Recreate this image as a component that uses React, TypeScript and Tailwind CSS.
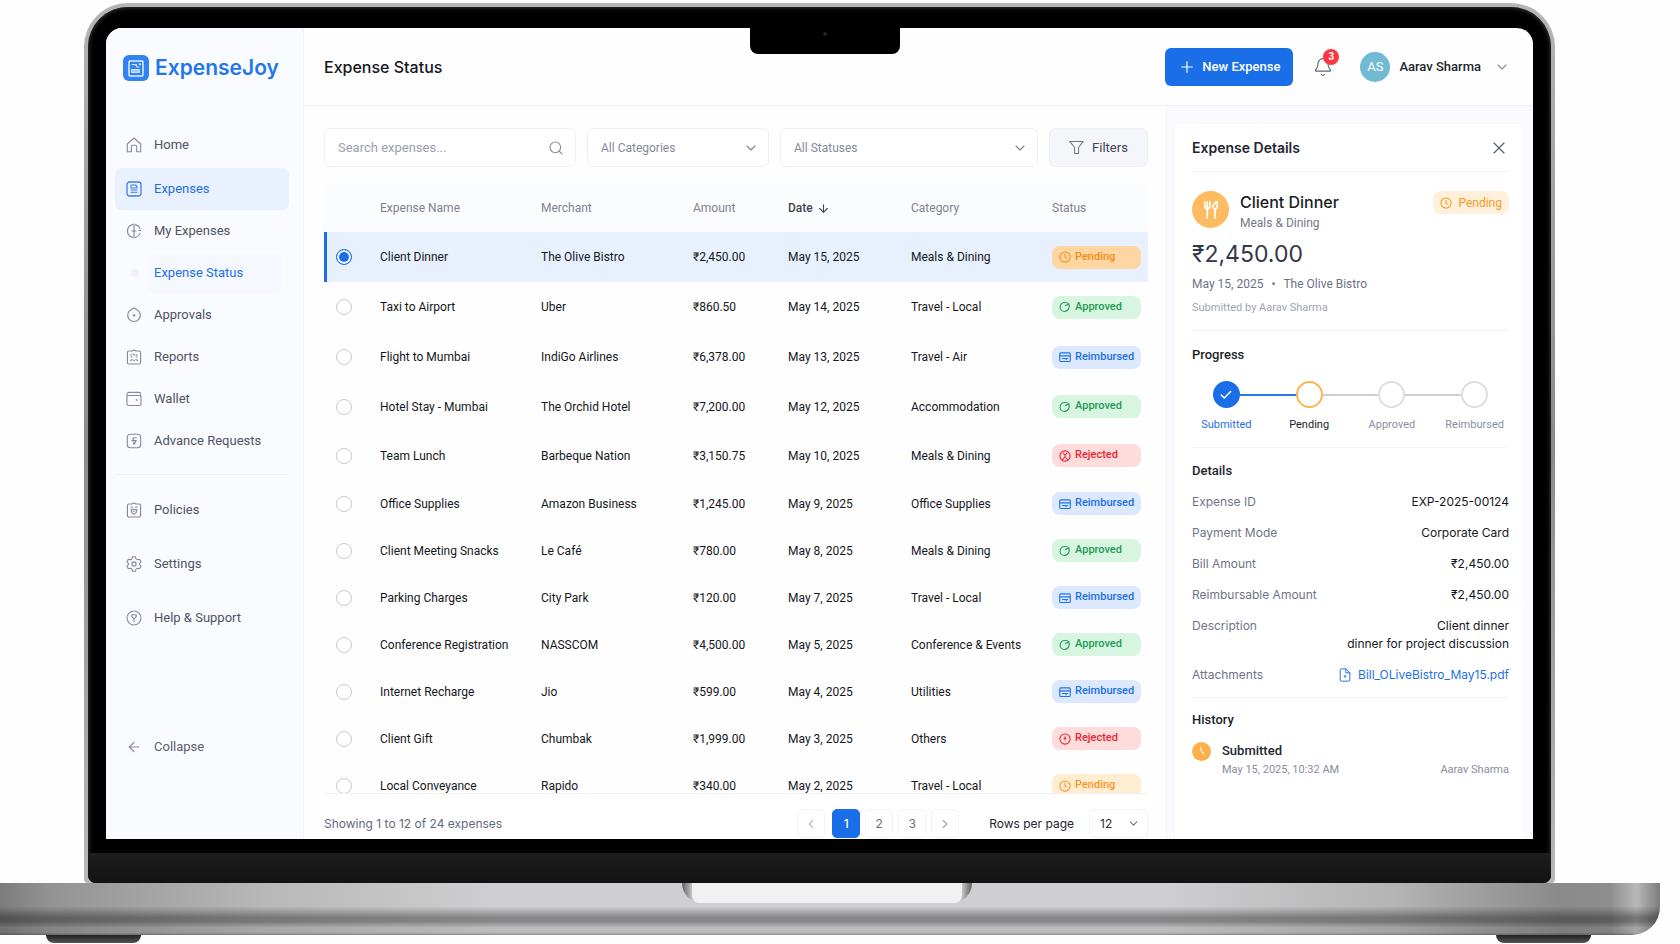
import { useState } from "react";
import type { ReactNode } from "react";
import { ArrowDown, ArrowLeft, Bell, Check, ChevronDown, ChevronLeft, ChevronRight, Plus, Search, X } from "lucide-react";

type Status = "Pending" | "Approved" | "Reimbursed" | "Rejected";

type Expense = {
  name: string;
  merchant: string;
  amount: string;
  date: string;
  category: string;
  status: Status;
};

const expenses: Expense[] = [
  { name: "Client Dinner", merchant: "The Olive Bistro", amount: "₹2,450.00", date: "May 15, 2025", category: "Meals & Dining", status: "Pending" },
  { name: "Taxi to Airport", merchant: "Uber", amount: "₹860.50", date: "May 14, 2025", category: "Travel - Local", status: "Approved" },
  { name: "Flight to Mumbai", merchant: "IndiGo Airlines", amount: "₹6,378.00", date: "May 13, 2025", category: "Travel - Air", status: "Reimbursed" },
  { name: "Hotel Stay - Mumbai", merchant: "The Orchid Hotel", amount: "₹7,200.00", date: "May 12, 2025", category: "Accommodation", status: "Approved" },
  { name: "Team Lunch", merchant: "Barbeque Nation", amount: "₹3,150.75", date: "May 10, 2025", category: "Meals & Dining", status: "Rejected" },
  { name: "Office Supplies", merchant: "Amazon Business", amount: "₹1,245.00", date: "May 9, 2025", category: "Office Supplies", status: "Reimbursed" },
  { name: "Client Meeting Snacks", merchant: "Le Café", amount: "₹780.00", date: "May 8, 2025", category: "Meals & Dining", status: "Approved" },
  { name: "Parking Charges", merchant: "City Park", amount: "₹120.00", date: "May 7, 2025", category: "Travel - Local", status: "Reimbursed" },
  { name: "Conference Registration", merchant: "NASSCOM", amount: "₹4,500.00", date: "May 5, 2025", category: "Conference & Events", status: "Approved" },
  { name: "Internet Recharge", merchant: "Jio", amount: "₹599.00", date: "May 4, 2025", category: "Utilities", status: "Reimbursed" },
  { name: "Client Gift", merchant: "Chumbak", amount: "₹1,999.00", date: "May 3, 2025", category: "Others", status: "Rejected" },
  { name: "Local Conveyance", merchant: "Rapido", amount: "₹340.00", date: "May 2, 2025", category: "Travel - Local", status: "Pending" },
];

const statusStyles: Record<Status, string> = {
  Pending: "bg-[#ffedd2] text-[#f5981d]",
  Approved: "bg-[#d8f5e2] text-[#1c9b52]",
  Reimbursed: "bg-[#dbe8fe] text-[#2270e8]",
  Rejected: "bg-[#ffdcdc] text-[#e8262f]",
};

function Glyph({ children, className = "size-4" }: { children: ReactNode; className?: string }) {
  return (
    <svg viewBox="0 0 16 16" fill="none" stroke="currentColor" strokeWidth="1.1" strokeLinecap="round" strokeLinejoin="round" className={`shrink-0 ${className}`} aria-hidden="true">
      {children}
    </svg>
  );
}

const clipboard = "M3 2h3l2-1 2 1h3c1 0 1.6.7 1.6 1.6v9.8c0 .9-.7 1.6-1.6 1.6H3c-1 0-1.6-.7-1.6-1.6V3.6C1.4 2.7 2 2 3 2z";

const navIcons: Record<string, ReactNode> = {
  Home: <path d="M1.3 7 8 1l6.7 6v7.7h-4V9.8c0-.9-.6-1.5-1.4-1.5H6.7c-.8 0-1.4.6-1.4 1.5v4.9h-4z" />,
  Expenses: (
    <>
      <rect x="1" y="1" width="14" height="14" rx="2.5" strokeWidth="1.3" />
      <path d="M5 4h4.5L11 5.5V7H5zM5 9h6M5 11.2h6" />
    </>
  ),
  "My Expenses": (
    <>
      <path d="M6.5 1.6a6.6 6.6 0 0 0 0 12.8M9.5 1.6a6.6 6.6 0 0 1 4.6 4M14.1 10.4a6.6 6.6 0 0 1-4.6 4M8 1v14" />
      <path d="M6 8h4M13 7.5h2" />
    </>
  ),
  Approvals: (
    <>
      <path d="M5.5 2.4a6.3 6.3 0 1 0 5 0M5.5 2.4 8 1l2.5 1.4" />
      <path d="M7 8.3h2M8 7.3v2" />
    </>
  ),
  Reports: (
    <>
      <path d={clipboard} />
      <path d="M4.5 6H6M7.5 5.2l1 1M10 6h1.5M5 8h1M10 8h1M4.5 11.5l1.5-1M7.3 11.2h1.4M10 10.5l1.5 1" />
    </>
  ),
  Wallet: (
    <>
      <path d="M1 4.5V3.2C1 2 1.8 1.4 3 1.4h10c1 0 1.6.6 1.6 1.6v1.5" />
      <rect x="1" y="4.5" width="14" height="10" rx="1.5" />
      <path d="M10.4 9h.6" strokeWidth="1.6" />
    </>
  ),
  "Advance Requests": (
    <>
      <rect x="1.3" y="1.2" width="13.4" height="13.6" rx="3" />
      <path d="M10.5 4.8H8.2C6.6 4.8 6.3 6 7.5 6.5M5.8 7.6h4.4L8.5 11M7.7 9v2.3" />
    </>
  ),
  Policies: (
    <>
      <path d={clipboard} />
      <path d="M5 5h1.5M9.5 5H11M5.3 7.2h5.4v2c0 1.6-1.4 2.4-2.7 3-1.3-.6-2.7-1.4-2.7-3zM7 9h2" />
    </>
  ),
  Settings: (
    <>
      <path d="M6.6.8h2.8l.6 2.1 1.5.9 2-.5 1.6 2.6-1.5 1.5v1.2l1.5 1.5-1.6 2.6-2-.5-1.5.9-.6 2.1H6.6L6 13.1l-1.5-.9-2 .5L.9 10.1l1.5-1.5V7.4L.9 5.9l1.6-2.6 2 .5L6 2.9z" />
      <circle cx="8" cy="8" r="2.1" />
    </>
  ),
  "Help & Support": (
    <>
      <circle cx="8" cy="8" r="7" />
      <path d="M5.8 4.8h4.4v1.8L8 8.8 5.8 6.6zM8 8.8v3" />
    </>
  ),
};

function StatusIcon({ status, alternate = false }: { status: Status; alternate?: boolean }) {
  if (status === "Approved") {
    return (
      <Glyph className="size-3">
        <path d="M13.5 5.5c1 4-1.8 8.5-6.2 8.5A5.8 5.8 0 0 1 1.5 8.200C1.500 4.500 4.500 2 8 2c2.500 0 4.300.5 5.500 2L8.500 6" strokeWidth="1.5" />
      </Glyph>
    );
  }
  if (status === "Reimbursed") {
    return (
      <Glyph className="size-3">
        <rect x="1" y="2.5" width="14" height="11.5" rx="1.5" strokeWidth="1.5" />
        <path d="M1 6.5h14M4.5 10h7M9.5 10v1.5" strokeWidth="1.5" />
      </Glyph>
    );
  }
  if (status === "Rejected" && alternate) {
    return (
      <Glyph className="size-3">
        <circle cx="8" cy="8" r="6.8" strokeWidth="1.5" />
        <path d="M4.5 13 8 9l3.5 4M8 9V6.5M5.5 4.5l2.5 2 2.5-2" strokeWidth="1.5" />
      </Glyph>
    );
  }
  return (
    <Glyph className="size-3">
      <circle cx="8" cy="8" r="6.8" strokeWidth="1.4" />
      <path d={status === "Rejected" ? "M8 5v4M6.5 7h3" : "M8 4v4.5l2.5 1"} strokeWidth="1.4" />
    </Glyph>
  );
}

function NavItem({ label, active = false }: { label: string; active?: boolean }) {
  return (
    <a
      href="#"
      className={`flex h-[42px] items-center gap-3 rounded-md pl-[11px] text-[13px] ${active ? "mt-0.5 bg-[#eaf1fe] text-[#1f6fe5]" : "text-[#4d5365]"}`}
    >
      <span className={active ? "text-[#3f7fe8]" : "text-[#838a9b]"}>
        <Glyph>{navIcons[label]}</Glyph>
      </span>
      {label}
    </a>
  );
}

function Sidebar() {
  return (
    <aside className="flex w-[198px] shrink-0 flex-col border-r border-[#f2f3f8] bg-[#fafbff] pr-[14px] pb-[71px] pl-[9px]">
      <div className="flex h-[78px] items-center gap-1.5 pt-0.5 pl-2 font-['Inter'] text-[21px] font-semibold text-[#2377ea]">
        <svg viewBox="0 0 26 26" className="size-[26px]" aria-hidden="true">
          <rect width="26" height="26" rx="6" fill="#3182f3" />
          <rect x="6" y="6" width="14" height="15" rx="1" fill="none" stroke="#e4effe" strokeWidth="1.5" />
          <path d="M8.5 9.5h5V12h3M8.5 14.5h8v3h-8z" fill="#a9cbfb" stroke="#cfe2fd" />
          <circle cx="17" cy="9.3" r="1" fill="#fff" />
        </svg>
        ExpenseJoy
      </div>
      <nav className="mt-[18px]">
        <NavItem label="Home" />
        <NavItem label="Expenses" active />
        <NavItem label="My Expenses" />
        <a href="#" className="flex h-[42px] items-center pr-2 pl-4 text-[13px] text-[#1f6fe5]">
          <span className="mr-[9px] size-2 rounded-full bg-[#eef0fc]" />
          <span className="flex h-[39px] flex-1 items-center rounded-md bg-[#f5f8ff] pl-1.5">Expense Status</span>
        </a>
        <NavItem label="Approvals" />
        <NavItem label="Reports" />
        <NavItem label="Wallet" />
        <NavItem label="Advance Requests" />
      </nav>
      <nav className="mt-3 grid gap-3 border-t border-[#eef0f6] pt-[14px]">
        <NavItem label="Policies" />
        <NavItem label="Settings" />
        <NavItem label="Help & Support" />
      </nav>
      <button type="button" className="mt-auto flex h-[42px] items-center gap-3 pl-[11px] text-[13px] text-[#596073]">
        <ArrowLeft className="size-4 text-[#838a9b]" strokeWidth={1.8} />
        Collapse
      </button>
    </aside>
  );
}

function Header() {
  return (
    <header className="flex h-[78px] shrink-0 items-center border-b border-[#f0f1f6] pr-[23px] pl-5">
      <h1 className="font-['Inter'] text-base font-medium text-[#15171f]">Expense Status</h1>
      <button type="button" className="ml-auto flex h-[38px] w-32 items-center justify-center gap-1.5 rounded-md bg-[#1a6ee8] text-[13px] font-medium whitespace-nowrap text-white">
        <Plus className="size-[18px]" strokeWidth={1.6} />
        New Expense
      </button>
      <button type="button" aria-label="Notifications, 3 unread" className="relative ml-5 text-[#5d6475]">
        <Bell className="size-5" strokeWidth={1.4} />
        <span className="absolute -top-2 left-2.5 flex size-4 items-center justify-center rounded-full bg-[#fb3640] text-[10px] font-bold text-white">3</span>
      </button>
      <button type="button" className="ml-[27px] flex items-center gap-[9px] text-[13px] font-medium text-[#22252f]">
        <span className="flex size-[30px] items-center justify-center rounded-full bg-[#70bbd3] text-[13px] font-normal text-white">AS</span>
        Aarav Sharma
        <ChevronDown className="ml-1 size-4 text-[#878d9c]" strokeWidth={1.6} />
      </button>
    </header>
  );
}

function Dropdown({ label, className }: { label: string; className: string }) {
  return (
    <div className={`relative ${className}`}>
      <select aria-label={label} className="h-full w-full appearance-none rounded-md border border-[#eff0f4] bg-white px-[13px] text-xs text-[#858a9a]">
        <option>{label}</option>
      </select>
      <ChevronDown className="pointer-events-none absolute top-3 right-2.5 size-4 text-[#7d8393]" strokeWidth={1.6} />
    </div>
  );
}

function Toolbar() {
  return (
    <div className="flex h-[39px] shrink-0 gap-[11px]">
      <div className="relative w-[252px]">
        <input type="search" aria-label="Search expenses" placeholder="Search expenses..." className="h-full w-full rounded-md border border-[#eff0f4] bg-white pr-10 pl-[13px] text-[13px] placeholder:text-[#9a9fac]" />
        <Search className="absolute top-3 right-3 size-4 text-[#858b9b]" strokeWidth={1.6} />
      </div>
      <Dropdown label="All Categories" className="w-[182px]" />
      <Dropdown label="All Statuses" className="flex-1" />
      <button type="button" className="flex w-[99px] items-center justify-center gap-2 rounded-md border border-[#eff0f4] bg-[#f5f6fa] text-[13px] text-[#404554]">
        <Glyph className="size-[15px] text-[#6f7585]">
          <path d="M.8 1.5h14.4L10.2 8v6.5H6V8z" />
        </Glyph>
        Filters
      </button>
    </div>
  );
}

function rowHeight(index: number) {
  return index < 3 ? "h-[50px]" : index < 5 ? "h-[49px]" : "h-[47px]";
}

function ExpenseTable() {
  const [selected, setSelected] = useState("Client Dinner");

  return (
    <div className="mt-[17px] min-h-0 flex-1 overflow-hidden">
      <table className="w-full table-fixed text-left text-xs whitespace-nowrap">
        <colgroup>
          <col className="w-14" />
          <col className="w-[161px]" />
          <col className="w-[152px]" />
          <col className="w-[95px]" />
          <col className="w-[123px]" />
          <col className="w-[141px]" />
          <col />
        </colgroup>
        <thead className="bg-[#fbfcfe] text-[#7d8293]">
          <tr className="h-12">
            <th className="font-normal" aria-label="Select" />
            <th className="font-normal">Expense Name</th>
            <th className="font-normal">Merchant</th>
            <th className="font-normal">Amount</th>
            <th className="font-medium text-[#3f4454]" aria-sort="descending">
              <span className="flex items-center gap-1">
                Date <ArrowDown className="size-[13px]" />
              </span>
            </th>
            <th className="font-normal">Category</th>
            <th className="font-normal">Status</th>
          </tr>
        </thead>
        <tbody className="text-[#15171c]">
          {expenses.map((expense, index) => {
            const isSelected = expense.name === selected;
            return (
              <tr key={expense.name} className={`${rowHeight(index)} ${isSelected ? "bg-[#e8f0fd]" : ""}`}>
                <td className={isSelected ? "shadow-[inset_3px_0_0_#1a6ee6]" : ""}>
                  <input
                    type="radio"
                    name="expense"
                    aria-label={`Select ${expense.name}`}
                    checked={isSelected}
                    onChange={() => setSelected(expense.name)}
                    className="ml-3 block size-4 appearance-none rounded-full border border-[#c6c9d3] bg-white checked:border-[#1a6ee6] checked:bg-[#1a6ee6] checked:shadow-[inset_0_0_0_2px_white]"
                  />
                </td>
                <td>{expense.name}</td>
                <td>{expense.merchant}</td>
                <td>{expense.amount}</td>
                <td>{expense.date}</td>
                <td>{expense.category}</td>
                <td>
                  <span className={`flex h-[23px] w-[89px] items-center gap-1 rounded-lg pl-[7px] text-[11px] font-medium ${isSelected && expense.status === "Pending" ? "bg-[#fed6a2] text-[#f58c14]" : statusStyles[expense.status]}`}>
                    <StatusIcon status={expense.status} alternate={expense.name === "Team Lunch"} />
                    {expense.status}
                  </span>
                </td>
              </tr>
            );
          })}
        </tbody>
      </table>
    </div>
  );
}

function Pagination() {
  const pageButton = "flex h-[29px] w-7 items-center justify-center rounded-[5px] border text-xs";

  return (
    <div className="flex h-[46px] shrink-0 items-start border-t border-[#eef0f4] bg-white pt-[15px] font-['Inter']">
      <p className="flex h-[29px] items-center text-xs text-[#636a7c]">Showing 1 to 12 of 24 expenses</p>
      <div className="ml-auto flex gap-[5px] text-[#6b7182]">
        <button type="button" aria-label="Previous page" className={`${pageButton} mr-0.5 border-[#f2f3f7] text-[#b6bac5]`}>
          <ChevronLeft className="size-[14px]" />
        </button>
        <button type="button" aria-current="page" className={`${pageButton} border-[#1a6ee8] bg-[#1a6ee8] font-medium text-white`}>1</button>
        <button type="button" className={`${pageButton} border-[#f2f3f7]`}>2</button>
        <button type="button" className={`${pageButton} border-[#f2f3f7]`}>3</button>
        <button type="button" aria-label="Next page" className={`${pageButton} border-[#f2f3f7] text-[#a4a9b6]`}>
          <ChevronRight className="size-[14px]" />
        </button>
      </div>
      <label className="ml-[30px] flex items-center gap-[15px] text-xs text-[#22252e]">
        Rows per page
        <span className="relative">
          <select className="h-[29px] w-[59px] appearance-none rounded-[5px] border border-[#f2f3f7] bg-white pl-[10px] text-xs text-[#2c303c]">
            <option>12</option>
            <option>24</option>
          </select>
          <ChevronDown className="pointer-events-none absolute top-2 right-2 size-[13px] text-[#6b7182]" />
        </span>
      </label>
    </div>
  );
}

const steps = [
  { label: "Submitted", circle: "border-[#1a6ee8] bg-[#1a6ee8]", text: "text-[#1f6fe5]", before: "", after: "bg-[#2c78e4]" },
  { label: "Pending", circle: "border-[#fbb44e] bg-white", text: "text-[#1b1e27]", before: "bg-[#2c78e4]", after: "bg-[#ccced8]" },
  { label: "Approved", circle: "border-[#dcdee6] bg-white", text: "text-[#8a8fa0]", before: "bg-[#ccced8]", after: "bg-[#ccced8]" },
  { label: "Reimbursed", circle: "border-[#dcdee6] bg-white", text: "text-[#8a8fa0]", before: "bg-[#ccced8]", after: "" },
];

const details = [
  ["Expense ID", "EXP-2025-00124"],
  ["Payment Mode", "Corporate Card"],
  ["Bill Amount", "₹2,450.00"],
  ["Reimbursable Amount", "₹2,450.00"],
];

function ExpenseDetails() {
  return (
    <aside className="w-[367px] shrink-0 overflow-hidden border-l border-[#f4f5fa] bg-[#fafaff] pt-[17px] pr-2 pl-[7px]">
      <div className="h-full rounded-t-md border border-b-0 border-[#f6f6fb] bg-white pr-[15px] pl-[17px]">
        <div className="flex h-12 items-center justify-between border-b border-[#f1f2f6]">
          <h2 className="font-['Inter'] text-sm font-semibold text-[#22252f]">Expense Details</h2>
          <button type="button" aria-label="Close details" className="text-[#5a6070]">
            <X className="size-5" strokeWidth={1.4} />
          </button>
        </div>

        <section className="border-b border-[#f1f2f6] pt-[19px] pb-[13px]">
          <div className="flex items-start">
            <span className="flex size-[37px] items-center justify-center rounded-full bg-[#fdbb62] text-white">
              <Glyph className="size-[18px]">
                <path d="M2.5 1v3.5C2.5 6 3.3 7 4.7 7S7 6 7 4.5V1M4.7 1v14M9.5 4.5c0 1.5.8 2.5 2 2.5s2-1 2-2.5V1h-1.3L9.5 4.500M11.5 7v8" strokeWidth="1.5" />
              </Glyph>
            </span>
            <div className="ml-[11px]">
              <h3 className="font-['Inter'] text-base leading-[22px] font-medium text-[#191c25]">Client Dinner</h3>
              <p className="text-xs leading-5 text-[#737889]">Meals &amp; Dining</p>
            </div>
            <span className="ml-auto flex h-[23px] items-center gap-1.5 rounded-lg bg-[#fff0dc] px-[7px] text-xs text-[#f59a24]">
              <StatusIcon status="Pending" />
              Pending
            </span>
          </div>
          <p className="font-['Inter'] text-[23px] leading-[42px] text-[#333848]">₹2,450.00</p>
          <p className="flex gap-2 text-xs leading-[18px] text-[#6d7284]">
            <span>May 15, 2025</span>
            <span>•</span>
            <span>The Olive Bistro</span>
          </p>
          <p className="pt-1.5 text-[11px] leading-[18px] text-[#a0a4b2]">Submitted by Aarav Sharma</p>
        </section>

        <section className="border-b border-[#f5f6f9] py-[14px]">
          <h3 className="text-[13px] leading-5 font-medium text-[#1c1f29]">Progress</h3>
          <ol className="-mx-[7px] mt-4 grid grid-cols-4">
            {steps.map((step, index) => (
              <li key={step.label}>
                <div className="flex items-center">
                  <span className={`h-0.5 flex-1 ${step.before}`} />
                  <span className={`flex size-[27px] items-center justify-center rounded-full border-2 text-white ${step.circle}`}>
                    {index === 0 && <Check className="size-[14px]" strokeWidth={2.5} />}
                  </span>
                  <span className={`h-0.5 flex-1 ${step.after}`} />
                </div>
                <p className={`mt-[9px] text-center text-[11px] leading-4 ${step.text}`}>{step.label}</p>
              </li>
            ))}
          </ol>
        </section>

        <section className="border-b border-[#f1f2f6] py-[13px]">
          <h3 className="text-[13px] leading-5 font-medium text-[#1c1f29]">Details</h3>
          <dl className="mt-3 grid gap-[13px] font-['Inter'] text-xs leading-[18px]">
            {details.map(([label, value]) => (
              <div key={label} className="flex justify-between">
                <dt className="text-[#6f7486]">{label}</dt>
                <dd className="text-[#15171c]">{value}</dd>
              </div>
            ))}
            <div className="flex justify-between">
              <dt className="text-[#6f7486]">Description</dt>
              <dd className="text-right text-[#15171c]">
                Client dinner
                <br />
                dinner for project discussion
              </dd>
            </div>
            <div className="flex justify-between">
              <dt className="text-[#6f7486]">Attachments</dt>
              <dd>
                <a href="#" className="flex items-center gap-1.5 text-[#1f6fe5]">
                  <Glyph className="size-[14px]">
                    <path d="M9 1H3.8C3 1 2.5 1.5 2.5 2.3v11.4c0 .8.5 1.3 1.3 1.3h8.4c.8 0 1.3-.5 1.3-1.3V5.5L9 1v4.5h4.5M7 9.5h2M8 8.5v2" />
                  </Glyph>
                  Bill_OLiveBistro_May15.pdf
                </a>
              </dd>
            </div>
          </dl>
        </section>

        <section className="pt-3">
          <h3 className="text-[13px] leading-5 font-medium text-[#1c1f29]">History</h3>
          <div className="mt-3 flex gap-[11px]">
            <span className="flex size-[19px] items-center justify-center rounded-full bg-[#fcb04c] text-white">
              <Glyph className="size-[15px]">
                <path d="M7 3.5 8 8l2.5 2.5" />
              </Glyph>
            </span>
            <div className="flex-1">
              <p className="text-[13px] leading-[18px] font-medium text-[#22252f]">Submitted</p>
              <p className="flex justify-between text-[11px] leading-5 text-[#888d9d]">
                <time>May 15, 2025, 10:32 AM</time>
                <span>Aarav Sharma</span>
              </p>
            </div>
          </div>
        </section>
      </div>
    </aside>
  );
}

export default function App() {
  return (
    <div className="min-h-screen overflow-hidden bg-[#fefefe] pt-[3px] font-['Roboto','Inter',sans-serif]">
      <div className="mr-[125px] ml-[84px] rounded-t-[44px] rounded-b-sm bg-linear-to-b from-[#b5b5b5] via-[#8b8b8b] to-[#b8b8b8] px-1 pt-1">
        <div className="overflow-hidden rounded-t-[40px] rounded-b-lg bg-black pt-[21px] shadow-[inset_0_0_4px_1px_#333]">
          <div className="relative mx-[18px] flex aspect-[1427/811] overflow-hidden rounded-t-[16px] bg-[#fefefe]">
            <Sidebar />
            <div className="flex min-w-0 flex-1 flex-col">
              <Header />
              <div className="flex min-h-0 flex-1">
                <main className="flex min-w-0 flex-1 flex-col pt-[22px] pr-[18px] pl-5">
                  <Toolbar />
                  <ExpenseTable />
                  <Pagination />
                </main>
                <ExpenseDetails />
              </div>
            </div>
            <div className="absolute top-0 left-[45.1%] flex h-[26px] w-[150px] justify-center rounded-b-lg bg-black pt-1">
              <span className="size-1 rounded-full bg-[#1e2530]" />
            </div>
          </div>
          <div className="mt-[14px] h-[30px] bg-linear-to-b from-[#1e1e1e] to-[#121212]" />
        </div>
      </div>

      <div className="mr-5 flex h-[52px] justify-center rounded-br-[28px] bg-[linear-gradient(to_bottom,transparent_45%,#00000059_66%,#00000059_74%,#00000018_86%,#00000018_95%,#00000050_100%),linear-gradient(to_right,#7c7c7c_0%,#939393_3%,#b8b8b8_16%,#cfcfd1_30%,#cfcfd1_70%,#b4b4b5_84%,#8a8a8a_94%,#8e8e8e_97%,#b8b8b8_98.6%,#7c7c7c_100%)] pr-1.5">
        <div className="h-5 w-[290px] rounded-b-[20px] bg-[linear-gradient(to_right,#606060,#f1f1f1_5%,#f1f1f1_95%,#606060)]">
          <div className="mx-auto h-full w-[270px] rounded-b-lg bg-[#f1f1f1]" />
        </div>
      </div>
      <div className="flex justify-between pr-[89px] pl-[46px]">
        <span className="h-2 w-[95px] rounded-b-lg bg-linear-to-b from-[#222] to-[#555]" />
        <span className="h-2 w-[95px] rounded-b-lg bg-linear-to-b from-[#222] to-[#555]" />
      </div>
    </div>
  );
}
